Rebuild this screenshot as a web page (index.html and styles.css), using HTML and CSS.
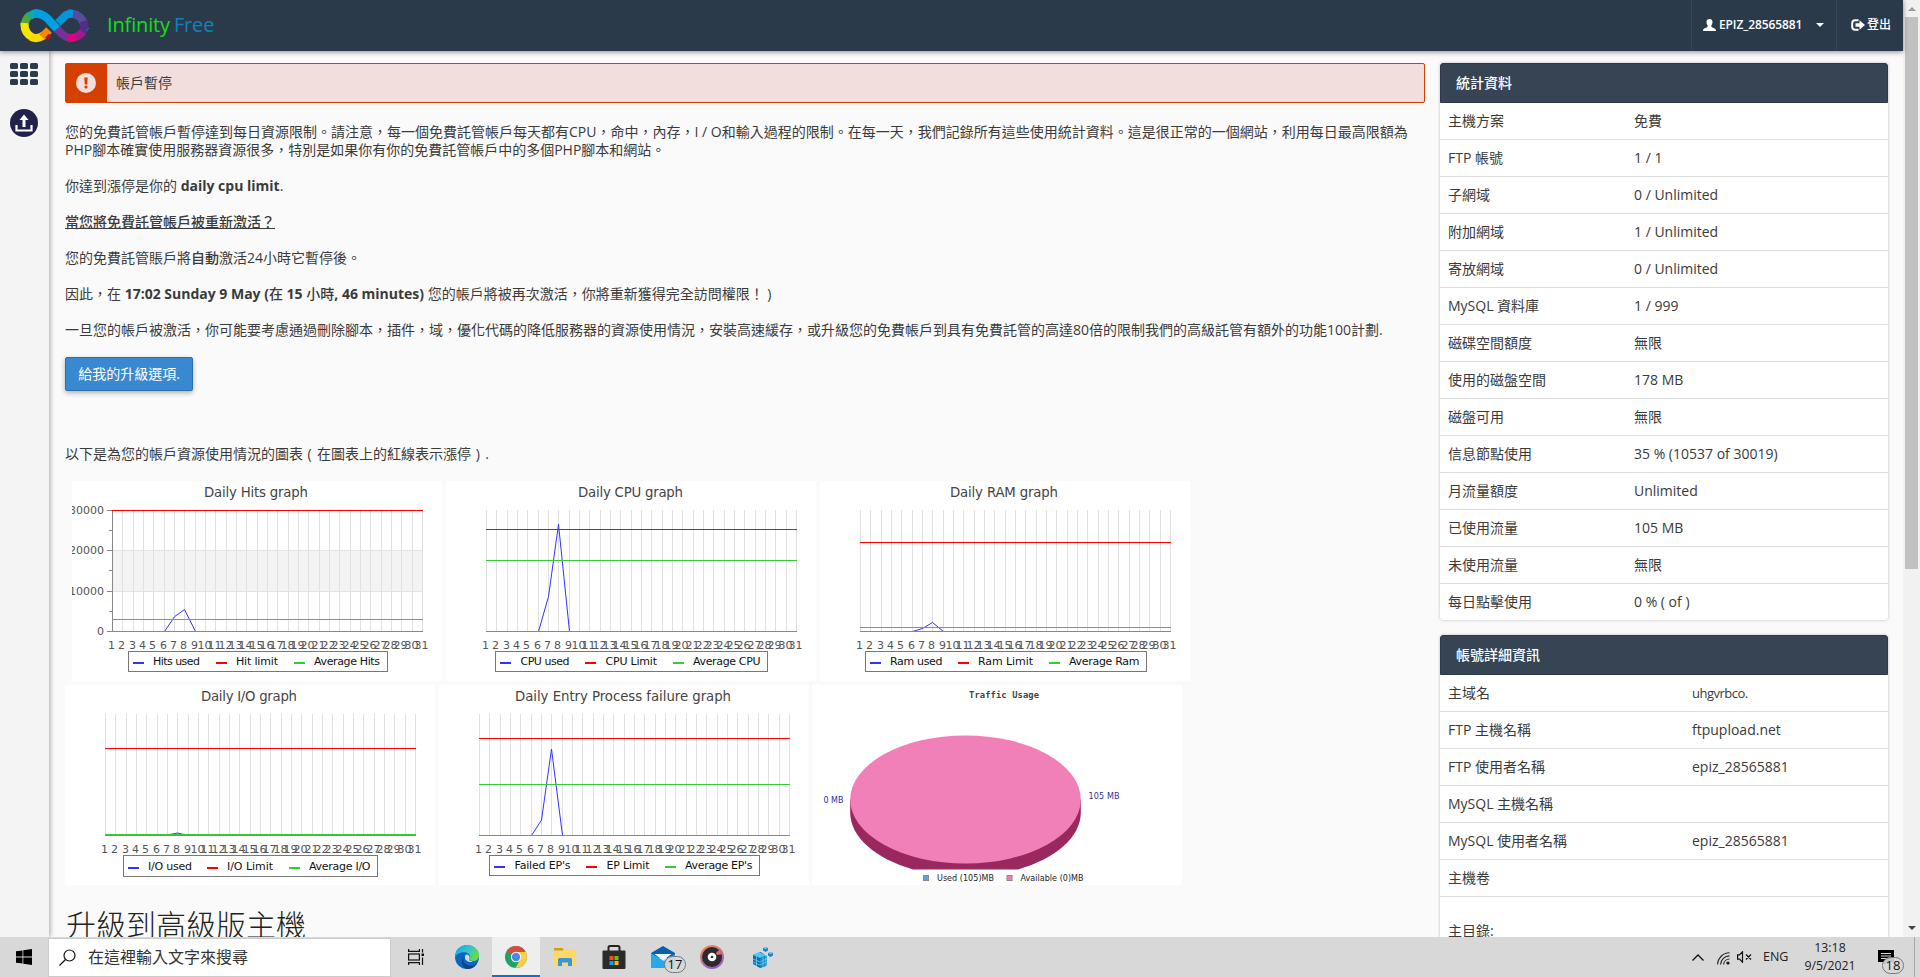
FILE: index.html
```html
<!DOCTYPE html>
<html lang="zh-Hant">
<head>
<meta charset="utf-8">
<title>InfinityFree</title>
<link rel="stylesheet" href="styles.css">
</head>
<body>
<div class="browser">
  <div class="page">
    <header class="topbar">
      <a class="brand">
        <svg class="brand-mark" width="70" height="34" viewBox="0 0 70 34">
          <g fill="none" stroke-width="8">
            <path d="M10 6 Q5 10 4.500 17" stroke="#4fa63a"/>
            <path d="M4.500 14 Q4 24 12 28" stroke="#f7e600"/>
            <path d="M11 28 Q18 31 24 26" stroke="#ffd800"/>
            <path d="M22 28 L29 21" stroke="#f58a00"/>
            <path d="M27 30 L30 26" stroke="#b5121b" stroke-width="4"/>
            <path d="M9 8 Q15 2 22 6" stroke="#1aa6a0"/>
            <path d="M14 5 Q21 4 27 9 L38 21" stroke="#00a0e3"/>
            <path d="M37 20 Q43 27 49 29" stroke="#7a2f9b"/>
            <path d="M38 14 L46 6 Q50 4 54 5" stroke="#0097dc"/>
            <path d="M53 5 Q61 6 64 15" stroke="#584a9c"/>
            <path d="M64 12 Q66 20 61 25" stroke="#562a87"/>
            <path d="M63 23 Q57 29 50 29" stroke="#a5178d"/>
            <path d="M56 28 L48 30" stroke="#e3007f" stroke-width="7"/>
          </g>
          <path d="M66 22 l3 -3 M48 1 l4 -1 M54 2 l4 1" stroke="#2470b0" stroke-width="1"/>
        </svg>
        <span class="brand-name"><span class="brand-green">Infinity</span><span class="brand-blue">Free</span></span>
      </a>
      <nav class="top-nav">
        <a class="nav-item nav-user">
          <svg width="13" height="12" viewBox="0 0 13 12" fill="#fff"><path d="M6.500 0C8.800 0 9.700 1.500 9.500 3.600C9.300 5.200 8.600 6 8.300 6.800C8.100 8 9 8.400 10.500 9C12.300 9.700 13 10.300 13 12H0C0 10.300 .7 9.700 2.500 9C4 8.400 4.900 8 4.700 6.800C4.400 6 3.700 5.200 3.500 3.600C3.300 1.500 4.200 0 6.500 0Z"/></svg>
          <span class="user-name">EPIZ_28565881</span>
          <span class="caret"></span>
        </a>
        <a class="nav-item nav-logout">
          <svg width="14" height="12" viewBox="0 0 14 12"><path d="M7.500 1.200H4.200Q1.200 1.200 1.200 4.200V7.800Q1.200 10.800 4.200 10.800H7.500" fill="none" stroke="#fff" stroke-width="2"/><path d="M4.500 4.200H8.500V1.300L14 6L8.500 10.700V7.800H4.500Z" fill="#fff"/></svg>
          <span>登出</span>
        </a>
      </nav>
    </header>
    <div class="body-row">
      <aside class="sidebar">
        <svg width="28" height="22" viewBox="0 0 28 22" fill="#2a3b4c"><rect width="8" height="6" rx="1.500"/><rect x="10" width="8" height="6" rx="1.500"/><rect x="20" width="8" height="6" rx="1.500"/><rect y="8" width="8" height="6" rx="1.500"/><rect x="10" y="8" width="8" height="6" rx="1.500"/><rect x="20" y="8" width="8" height="6" rx="1.500"/><rect y="16" width="8" height="6" rx="1.500"/><rect x="10" y="16" width="8" height="6" rx="1.500"/><rect x="20" y="16" width="8" height="6" rx="1.500"/></svg>
        <svg width="28" height="28" viewBox="0 0 28 28"><circle cx="14" cy="14" r="14" fill="#20224a"/><path d="M14 5.500L18.500 11H15.500V18H12.500V11H9.500Z" fill="#fff"/><path d="M6.500 16V21.500H21.500V16" fill="none" stroke="#fff" stroke-width="2.200"/></svg>
      </aside>
      <main class="content">
        <div class="alert">
          <span class="alert-icon"><svg width="20" height="20" viewBox="0 0 20 20"><circle cx="10" cy="10" r="10" fill="#f3dede"/><path d="M8.300 4.500H11.700L11.200 11.500H8.800Z" fill="#d34000"/><circle cx="10" cy="14" r="1.600" fill="#d34000"/></svg></span>
          <span class="alert-text">帳戶暫停</span>
        </div>
        <p class="lead">您的免費託管帳戶暫停達到每日資源限制。請注意，每一個免費託管帳戶每天都有CPU，命中，內存，I / O和輸入過程的限制。在每一天，我們記錄所有這些使用統計資料。這是很正常的一個網站，利用每日最高限額為<br>PHP腳本確實使用服務器資源很多，特別是如果你有你的免費託管帳戶中的多個PHP腳本和網站。</p>
        <p>你達到漲停是你的 <b>daily cpu limit</b>.</p>
        <p><u>當您將免費託管帳戶被重新激活？</u></p>
        <p>您的免費託管賬戶將<span class="mid">自動</span>激活24小時它暫停後。</p>
        <p>因此，在 <b>17:02 Sunday 9 May (<span class="mid">在</span> 15 <span class="mid">小時</span>, 46 minutes)</b> 您的帳戶將被再次激活，你將重新獲得完全訪問權限！ )</p>
        <p>一旦您的帳戶被激活，你可能要考慮通過刪除腳本，插件，域，優化代碼的降低服務器的資源使用情況，安裝高速緩存，或升級您的免費帳戶到具有免費託管的高達80倍的限制我們的高級託管有額外的功能100計劃.</p>
        <a class="btn">給我的升級選項.</a>
        <p class="charts-note">以下是為您的帳戶資源使用情況的圖表<span class="paren"> ( </span>在圖表上的紅線表示漲停<span class="paren"> ) </span>.</p>
        <div class="charts charts-first" id="charts-a"></div>
        <div class="charts" id="charts-b">
          <svg class="chart pie" width="370" height="200" viewBox="0 0 370 200">
            <path d="M38.200 114.500V128A115.300 64 0 0 0 101 184.500H206A115.300 64 0 0 0 268.800 128V114.500Z" fill="#9a285f"/>
            <ellipse cx="153.500" cy="114.500" rx="115.300" ry="64" fill="#f280b8"/>
            <text class="pie-title" x="157" y="13" textLength="70">Traffic Usage</text>
            <text class="pie-value" x="11.500" y="118" textLength="20">0 MB</text>
            <text class="pie-value" x="276.500" y="114" textLength="31">105 MB</text>
            <rect x="111.500" y="190.500" width="5" height="5" fill="#5aa2ea" stroke="#888"/>
            <text class="pie-key" x="125" y="196" textLength="57">Used (105)MB</text>
            <rect x="195" y="190.500" width="5" height="5" fill="#f280b8" stroke="#888"/>
            <text class="pie-key" x="208.500" y="196" textLength="63">Available (0)MB</text>
          </svg>
        </div>
        <h2>升級到高級版主機</h2>
      </main>
      <aside class="panels">
        <section class="panel">
          <h3>統計資料</h3>
          <dl class="rows">
            <div><dt>主機方案</dt><dd>免費</dd></div>
            <div><dt>FTP 帳號</dt><dd>1 / 1</dd></div>
            <div><dt>子網域</dt><dd>0 / Unlimited</dd></div>
            <div><dt>附加網域</dt><dd>1 / Unlimited</dd></div>
            <div><dt>寄放網域</dt><dd>0 / Unlimited</dd></div>
            <div><dt>MySQL 資料庫</dt><dd>1 / 999</dd></div>
            <div><dt>磁碟空間額度</dt><dd>無限</dd></div>
            <div><dt>使用的磁盤空間</dt><dd>178 MB</dd></div>
            <div><dt>磁盤可用</dt><dd>無限</dd></div>
            <div><dt>信息節點使用</dt><dd>35 % (10537 of 30019)</dd></div>
            <div><dt>月流量額度</dt><dd>Unlimited</dd></div>
            <div><dt>已使用流量</dt><dd>105 MB</dd></div>
            <div><dt>未使用流量</dt><dd>無限</dd></div>
            <div><dt>每日點擊使用</dt><dd>0 % ( of )</dd></div>
          </dl>
        </section>
        <section class="panel">
          <h3>帳號詳細資訊</h3>
          <dl class="rows rows-wide">
            <div><dt>主域名</dt><dd class="domain">uhgvrbco.</dd></div>
            <div><dt>FTP 主機名稱</dt><dd>ftpupload.net</dd></div>
            <div><dt>FTP 使用者名稱</dt><dd>epiz_28565881</dd></div>
            <div><dt>MySQL 主機名稱</dt><dd></dd></div>
            <div><dt>MySQL 使用者名稱</dt><dd>epiz_28565881</dd></div>
            <div><dt>主機卷</dt><dd></dd></div>
            <div class="row-tall"><dt>主目錄:</dt><dd></dd></div>
          </dl>
        </section>
      </aside>
    </div>
  </div>
  <div class="scrollbar">
    <span class="arrow-up"></span>
    <span class="thumb"></span>
    <span class="arrow-down"></span>
  </div>
</div>
<footer class="taskbar">
  <span class="start"><svg width="16" height="16" viewBox="0 0 16 16"><path d="M0 2.300L6.500 1.400V7.600H0ZM7.300 1.300L16 0V7.600H7.300ZM0 8.400H6.500V14.600L0 13.700ZM7.300 8.400H16V16L7.300 14.700Z"/></svg></span>
  <div class="search">
    <svg width="17" height="17" viewBox="0 0 17 17" fill="none" stroke="#111" stroke-width="1.200"><circle cx="10.500" cy="6.500" r="5.500"/><path d="M6.500 10.500L.5 16.500"/></svg>
    <span>在這裡輸入文字來搜尋</span>
  </div>
  <span class="task"><svg width="16" height="16" viewBox="0 0 16 16" fill="none" stroke="#111" stroke-width="1.200"><path d="M.6 0V2.400H11.400V0M.6 16V13.600H11.400V16"/><rect x=".6" y="5" width="10.800" height="6"/><path d="M14.500 0V3.500M14.500 8.500V16"/><rect x="13.500" y="4.500" width="2.500" height="2.500" fill="#111" stroke="none"/></svg></span>
  <span class="task task-edge"><svg width="24" height="24" viewBox="0 0 24 24">
    <defs>
      <linearGradient id="eg" x1="0" y1="0" x2="1" y2=".5"><stop offset="0" stop-color="#1b9de2"/><stop offset=".5" stop-color="#2cc3d5"/><stop offset="1" stop-color="#62dc4c"/></linearGradient>
    </defs>
    <circle cx="12" cy="12" r="12" fill="#0c67c2"/>
    <path d="M0 12C0 5 5.500 0 12 0C19 0 24 5 24 10.500C24 14 21.500 16 18.500 16C15.500 16 14 15 14.500 14C16.500 11 14 8.500 11 7.500C6 6.500 1.500 9 0 12Z" fill="url(#eg)"/>
    <path d="M9 11C7 14.500 8.500 19.500 13.500 20.500C17 21.300 20.500 20 22.300 18C20 22.500 16 24 12 24C6.500 22.500 5 15 9 11Z" fill="#11437f"/>
    <path d="M11.500 9.500C14 9.500 15.500 12 14.200 14C13.800 15.500 15 16.200 18 16.200C16 18 10.500 16.500 10 13C9.700 11 10.500 10 11.500 9.500Z" fill="#d9d9d9"/>
  </svg></span>
  <span class="task task-active"><svg width="22" height="22" viewBox="0 0 22 22">
    <circle cx="11" cy="11" r="11" fill="#1da462"/>
    <path d="M11 11L1.500 5.500A11 11 0 0 1 20.500 5.500Z" fill="#d84c3f"/>
    <path d="M11 6H20.800A11 11 0 0 1 10.500 22L15.300 13.500Z" fill="#ffcd46"/>
    <circle cx="11" cy="11" r="5.200" fill="#fff"/><circle cx="11" cy="11" r="4.200" fill="#4c86ee"/>
  </svg></span>
  <span class="task"><svg width="22" height="18" viewBox="0 0 22 18"><path d="M0 0H8.500L10 2.500H0Z" fill="#d99a06"/><path d="M0 3.500H8L10.500 1.500H22V17.500H0Z" fill="#ffd867"/><path d="M4 18V11.500Q4 10 5.500 10H16.500Q18 10 18 11.500V18H14V14.500H8V18Z" fill="#3a95dd"/></svg></span>
  <span class="task"><svg width="24" height="24" viewBox="0 0 24 24"><path d="M6.500 8V2.500Q6.500 1 8 1H16Q17.500 1 17.500 2.500V8" fill="none" stroke="#222" stroke-width="2"/><rect x=".5" y="5.500" width="23" height="18.500" rx="1" fill="#2b2b2b"/><path d="M7.500 11H11.500V15H7.500Z" fill="#f25022"/><path d="M12.500 11H16.500V15H12.500Z" fill="#7fba00"/><path d="M7.500 16H11.500V20H7.500Z" fill="#00a4ef"/><path d="M12.500 16H16.500V20H12.500Z" fill="#ffb900"/></svg></span>
  <span class="task task-mail"><svg width="24" height="23" viewBox="0 0 24 23"><path d="M0 7L12 0L24 7V12H0Z" fill="#0560ad"/><path d="M0 7L13 15L24 8V22H0Z" fill="#28a8ea"/><path d="M3.500 8H20.500L12 14.500Z" fill="#f5f5f5"/></svg><span class="badge badge-mail">17</span></span>
  <span class="task"><svg width="24" height="24" viewBox="0 0 24 24"><defs><linearGradient id="gr" x1=".2" y1="0" x2=".6" y2="1"><stop offset="0" stop-color="#f58b4e"/><stop offset="1" stop-color="#9458c8"/></linearGradient></defs><circle cx="12" cy="12" r="12" fill="url(#gr)"/><circle cx="12" cy="12" r="10" fill="#2c2a2d"/><path d="M16 8L19 5L22 9L17 10Z" fill="#e0716a"/><circle cx="12" cy="12" r="4.300" fill="#fff"/><circle cx="12" cy="12" r="1.300" fill="#333"/></svg></span>
  <span class="task task-cube"><svg width="20" height="22" viewBox="0 0 20 22"><path d="M0 9L8 6L13 10V20L7 22L0 18Z" fill="#0b6fa6"/><path d="M0 9L6 6L13 9.500L7 12Z" fill="#54c8f2"/><path d="M7 12L14 9.500V19L7 22Z" fill="#1587c1"/><path d="M0 13L7 16L14 12.500M0 16L7 19L14 15.500M3.500 10.500V20M10 11V21M13 10V20" stroke="#6cd3f5" stroke-width=".8" fill="none"/><path d="M10 2L12.500 1L15 2V4.500L12.500 6L10 4.500ZM15 7L17.500 6L20 7V9.500L17.500 11L15 9.500Z" fill="#1287c4"/><path d="M10 2L12.500 1L15 2L12.500 3ZM15 7L17.500 6L20 7L17.500 8Z" fill="#6cd3f5"/></svg></span>
  <div class="tray">
    <svg width="12" height="7" viewBox="0 0 12 7" fill="none" stroke="#111" stroke-width="1.300"><path d="M.5 6.500L6 1L11.500 6.500"/></svg>
    <svg class="wifi" width="13" height="13" viewBox="0 0 13 13" fill="none" stroke="#222" stroke-width="1.100"><path d="M.6 12.500A12 12 0 0 1 12.500 .8M3.600 12.500A9 9 0 0 1 12.500 3.900M6.600 12.500A6 6 0 0 1 12.500 7"/><circle cx="11" cy="11" r="1.600" fill="#111" stroke="none"/></svg>
    <svg class="volume" width="15" height="12" viewBox="0 0 15 12" fill="none" stroke="#111" stroke-width="1.200"><path d="M.6 3.800H2.500L5.500 .8V11.200L2.500 8.200H.6ZM9 3.500L14 8.500M14 3.500L9 8.500"/></svg>
    <span class="lang">ENG</span>
    <span class="clock"><span>13:18</span><span>9/5/2021</span></span>
    <span class="notice"><svg width="16" height="15" viewBox="0 0 16 15"><path d="M0 0H16V12H9L6 15V12H0Z"/><path d="M3 3.500H13M3 6H13M3 8.500H9" stroke="#ddd" stroke-width="1"/></svg><span class="badge badge-notice">18</span></span>
    <span class="show-desktop"></span>
  </div>
</footer>
<script src="charts.js"></script>
</body>
</html>
```

FILE: styles.css
```css
* { box-sizing: border-box; }
body {
  margin: 0;
  height: 977px;
  overflow: hidden;
  display: flex;
  flex-direction: column;
  font-family: "Open Sans", "Noto Sans CJK TC", sans-serif;
  font-size: 14px;
  line-height: 18px;
  color: #3a3a3a;
  background: #fafafa;
}
svg { display: block; flex: none; }
.browser { height: 937px; display: flex; overflow: hidden; }
.page { width: 1903px; display: flex; flex-direction: column; }

.topbar {
  height: 51px;
  flex: none;
  display: flex;
  justify-content: space-between;
  background: #2a3a4b;
  box-shadow: 0 1px 5px rgba(0, 0, 0, .45);
  position: relative;
  z-index: 2;
}
.brand { display: flex; padding: 9px 0 0 20px; gap: 17px; }
.brand-name { font-size: 20px; line-height: 32px; letter-spacing: -.15px; display: flex; gap: 4px; }
.brand-green { color: #12e012; }
.brand-blue { color: #0c82bd; }
.top-nav { display: flex; color: #fff; font-size: 12px; font-weight: 600; }
.nav-item { display: flex; align-items: center; border-left: 1px solid #35485b; padding-bottom: 1px; }
.nav-user { width: 145px; padding-left: 11px; gap: 3px; }
.user-name { letter-spacing: -.1px; width: 94px; }
.caret { border: 4px solid transparent; border-top-color: #fff; border-bottom: 0; }
.nav-logout { width: 67px; padding-left: 14px; gap: 2px; font-weight: 500; }

.body-row { display: flex; flex: 1; min-height: 0; }
.sidebar {
  width: 49px;
  flex: none;
  background: #f4f4f4;
  box-shadow: 1px 0 5px rgba(0, 0, 0, .35);
  display: flex;
  flex-direction: column;
  align-items: flex-start;
  padding: 12px 0 0 10px;
  gap: 24px;
}
.content { width: 1376px; flex: none; padding: 12px 0 0 16px; }
.content p { margin: 0 0 18px; white-space: nowrap; }
.mid { font-weight: 500; }
.content u { font-weight: 500; }
.content b { font-weight: 700; }
.paren { letter-spacing: .9px; white-space: pre; }
.alert {
  height: 40px;
  display: flex;
  align-items: center;
  border: 1px solid #d34000;
  border-radius: 2px;
  background: #f3dede;
  margin-bottom: 20px;
}
.alert-icon { width: 41px; align-self: stretch; background: #d34000; display: flex; align-items: center; justify-content: center; padding-right: 1px; margin-right: 9px; }
.btn {
  display: flex;
  align-items: center;
  justify-content: center;
  width: 128px;
  height: 34px;
  background: #3989d0;
  border: 1px solid #2b6fb0;
  border-radius: 2px;
  color: #fff;
  font-weight: 400;
  box-shadow: 0 2px 5px rgba(0, 0, 0, .3);
}
.content .charts-note { margin: 54px 0 18px; }
.charts { display: flex; gap: 4px; margin-bottom: 4px; }
.charts-first { padding-left: 7px; }
.chart { background: #fff; overflow: hidden; }
.pie { margin-left: -1px; }
.chart-title { font: 13.300px "DejaVu Sans", sans-serif; fill: #444; }
.axis-label { font: 11px "DejaVu Sans", sans-serif; fill: #555; }
.legend-label { font: 11px "DejaVu Sans", sans-serif; fill: #111; }
.pie-title { font: bold 8.800px "DejaVu Sans Mono", monospace; fill: #444; }
.pie-value { font: 8px "DejaVu Sans", sans-serif; fill: #2d2da0; }
.pie-key { font: 8px "DejaVu Sans", sans-serif; fill: #222; }
.content h2 { margin: 18px 0 0 1px; font-size: 30px; line-height: 44px; font-weight: 300; white-space: nowrap; color: #222; }

.panels { width: 448px; margin: 12px 0 0 15px; display: flex; flex-direction: column; gap: 15px; }
.panel { background: #fff; border-radius: 3px; box-shadow: 0 0 3px rgba(0, 0, 0, .25); flex: none; }
.panel h3 {
  margin: 0;
  height: 40px;
  padding-left: 15px;
  line-height: 38px;
  font-size: 14px;
  font-weight: 500;
  color: #fff;
  background: #364454;
  border: 1px solid #2a3a4b;
  border-radius: 3px 3px 0 0;
}
.rows { margin: 0; }
.rows > div { height: 37px; display: flex; padding: 9px 0 0 8px; border-bottom: 1px solid #ddd; }
.rows > div:last-child { border-bottom: 0; height: 36px; }
.rows dt { width: 186px; }
.rows dd { margin: 0; }
.rows-wide dt { width: 244px; }
.rows .domain { font-size: 13px; letter-spacing: -.5px; }
.rows > .row-tall:last-child { height: 90px; padding-top: 25px; }

.scrollbar { width: 17px; flex: none; background: #f1f1f1; display: flex; flex-direction: column; align-items: center; }
.arrow-up { margin: 7px 0 6px; border: 4px solid transparent; border-bottom-color: #999; border-top: 0; }
.thumb { width: 13px; height: 552px; background: #c1c1c1; }
.arrow-down { margin: 357px 0 0; border: 4px solid transparent; border-top-color: #444; border-bottom: 0; }

.taskbar { height: 40px; display: flex; align-items: center; background: #d8d8d8; color: #222; }
.start { width: 48px; padding-left: 16px; }
.search {
  width: 343px;
  height: 39px;
  background: #fff;
  border: 1px solid #ccc;
  display: flex;
  align-items: center;
  gap: 12px;
  padding-left: 10px;
  font-size: 16px;
  color: #333;
}
.task { width: 49px; height: 40px; display: flex; align-items: center; justify-content: center; position: relative; }
.task-edge { width: 52px; padding-left: 2px; }
.task-active { width: 48px; background: #eee; border-bottom: 2px solid #0078d7; padding-top: 2px; }
.task-cube { padding-left: 4px; }
.badge {
  position: absolute;
  height: 17px;
  border: 1px solid #777;
  border-radius: 9px;
  background: rgba(217, 217, 217, .9);
  font-size: 13px;
  line-height: 15px;
  text-align: center;
  color: #111;
}
.badge-mail { width: 22px; left: 26px; top: 19px; }
.tray { margin-left: auto; display: flex; align-items: center; width: 228px; height: 40px; font-size: 12px; }
.wifi { margin: 3px 0 0 13px; }
.volume { margin-left: 7px; }
.lang { margin-left: 11px; width: 27px; font-size: 12.500px; }
.clock { margin-left: 12px; width: 56px; display: flex; flex-direction: column; align-items: center; font-size: 12.300px; }
.notice { margin-left: 20px; position: relative; }
.badge-notice { width: 22px; left: 4px; top: 7px; }
.show-desktop { margin-left: 20px; width: 1px; height: 40px; background: #a8a8a8; }
```

FILE: charts.js
```js
const NS = 'http://www.w3.org/2000/svg';
const LEFT = 40.5, RIGHT = 350.5, TOP = 29.5, BASE = 150.5;
const BLUE = '#33f', RED = '#f00', GREEN = '#3c3';

// Each legend entry: [dash x, label, label x, label width]
const charts = [
  { into: 'charts-a', title: ['Daily Hits graph', 132, 104], limit: 29.5, average: 138.5, day7: 135.7, day8: 128.5, yAxis: true,
    box: [56.5, 259, 20], legend: [[61, 'Hits used', 81, 47], [144, 'Hit limit', 164, 42], [222, 'Average Hits', 242, 66]] },
  { into: 'charts-a', title: ['Daily CPU graph', 132, 105], limit: 48.5, average: 79.5, day7: 115.6, day8: 43.3,
    box: [49.5, 272, 20], legend: [[54, 'CPU used', 74.5, 49], [139, 'CPU Limit', 159.5, 51.5], [227, 'Average CPU', 247, 67.5]] },
  { into: 'charts-a', title: ['Daily RAM graph', 130, 108], limit: 61.5, average: 146.5, day7: 147.5, day8: 141.5,
    box: [45.5, 281, 20], legend: [[50, 'Ram used', 70, 52.5], [138, 'Ram Limit', 158, 55], [229, 'Average Ram', 249, 70.5]] },
  { into: 'charts-b', title: ['Daily I/O graph', 136, 96], limit: 63.5, average: 149.5, day7: 150, day8: 148,
    box: [58.5, 254, 21], shift: 1, legend: [[63, 'I/O used', 83, 44], [142, 'I/O Limit', 162, 46], [224, 'Average I/O', 244, 61.5]] },
  { into: 'charts-b', title: ['Daily Entry Process failure graph', 76, 216], limit: 53.5, average: 99.5, day7: 135, day8: 64,
    box: [50.5, 270, 20], legend: [[55, "Failed EP's", 75.5, 56], [147, 'EP Limit', 167.5, 43], [226, "Average EP's", 246, 67.5]] }
];

function add(svg, tag, attrs, text) {
  const el = document.createElementNS(NS, tag);
  for (const key in attrs) el.setAttribute(key, attrs[key]);
  if (text) el.textContent = text;
  svg.appendChild(el);
}
function line(svg, x1, y1, x2, y2, stroke, width = 1) {
  add(svg, 'line', { x1, y1, x2, y2, stroke, 'stroke-width': width });
}
const dayX = day => Math.round((day - 1) * (RIGHT - LEFT) / 30) + LEFT;

function draw(chart) {
  const svg = document.createElementNS(NS, 'svg');
  svg.setAttribute('class', 'chart');
  svg.setAttribute('width', 370);
  svg.setAttribute('height', 200);

  add(svg, 'text', { class: 'chart-title', x: chart.title[1], y: 16, textLength: chart.title[2] }, chart.title[0]);
  if (chart.yAxis) {
    add(svg, 'rect', { x: LEFT, y: 69.5, width: 310, height: 41, fill: '#f3f3f3', stroke: '#e3e3e3' });
  }
  for (let day = 1; day <= 31; day++) line(svg, dayX(day), TOP - .5, dayX(day), BASE, '#e0e0e0');
  if (chart.yAxis) {
    [[29.5, '30000'], [69.5, '20000'], [110.5, '10000'], [150.5, '0']].forEach(([y, label]) => {
      line(svg, 35, y, 40, y, '#888');
      add(svg, 'text', { class: 'axis-label', x: 32, y: y + 3.5, 'text-anchor': 'end' }, label);
    });
    [49.5, 89.5, 130.5].forEach(y => line(svg, 37, y, 40, y, '#888'));
    line(svg, LEFT, TOP, LEFT, BASE, '#888');
  }
  const points = [[6, BASE], [7, chart.day7], [8, chart.day8], [9, BASE]];
  add(svg, 'polyline', { points: points.map(([d, y]) => dayX(d) + ',' + y).join(' '), fill: 'none', stroke: BLUE, 'stroke-width': 1 });
  line(svg, 40, BASE, 351, BASE, '#888');
  line(svg, 40, chart.limit, 351, chart.limit, RED);
  line(svg, 40, chart.average, 351, chart.average, GREEN);
  for (let day = 1; day <= 31; day++) {
    add(svg, 'text', { class: 'axis-label', x: dayX(day) - 1, y: 168, 'text-anchor': 'middle' }, String(day));
  }

  const shift = chart.shift || 0;
  add(svg, 'rect', { x: chart.box[0], y: 170.5, width: chart.box[1], height: chart.box[2], fill: '#fff', stroke: '#777' });
  chart.legend.forEach(([x, label, labelX, width], i) => {
    line(svg, x, 182 + shift, x + 11, 182 + shift, [BLUE, RED, GREEN][i], 2);
    add(svg, 'text', { class: 'legend-label', x: labelX, y: 184 + shift, textLength: width }, label);
  });

  const parent = document.getElementById(chart.into);
  parent.insertBefore(svg, parent.querySelector('.pie'));
}
charts.forEach(draw);
```
